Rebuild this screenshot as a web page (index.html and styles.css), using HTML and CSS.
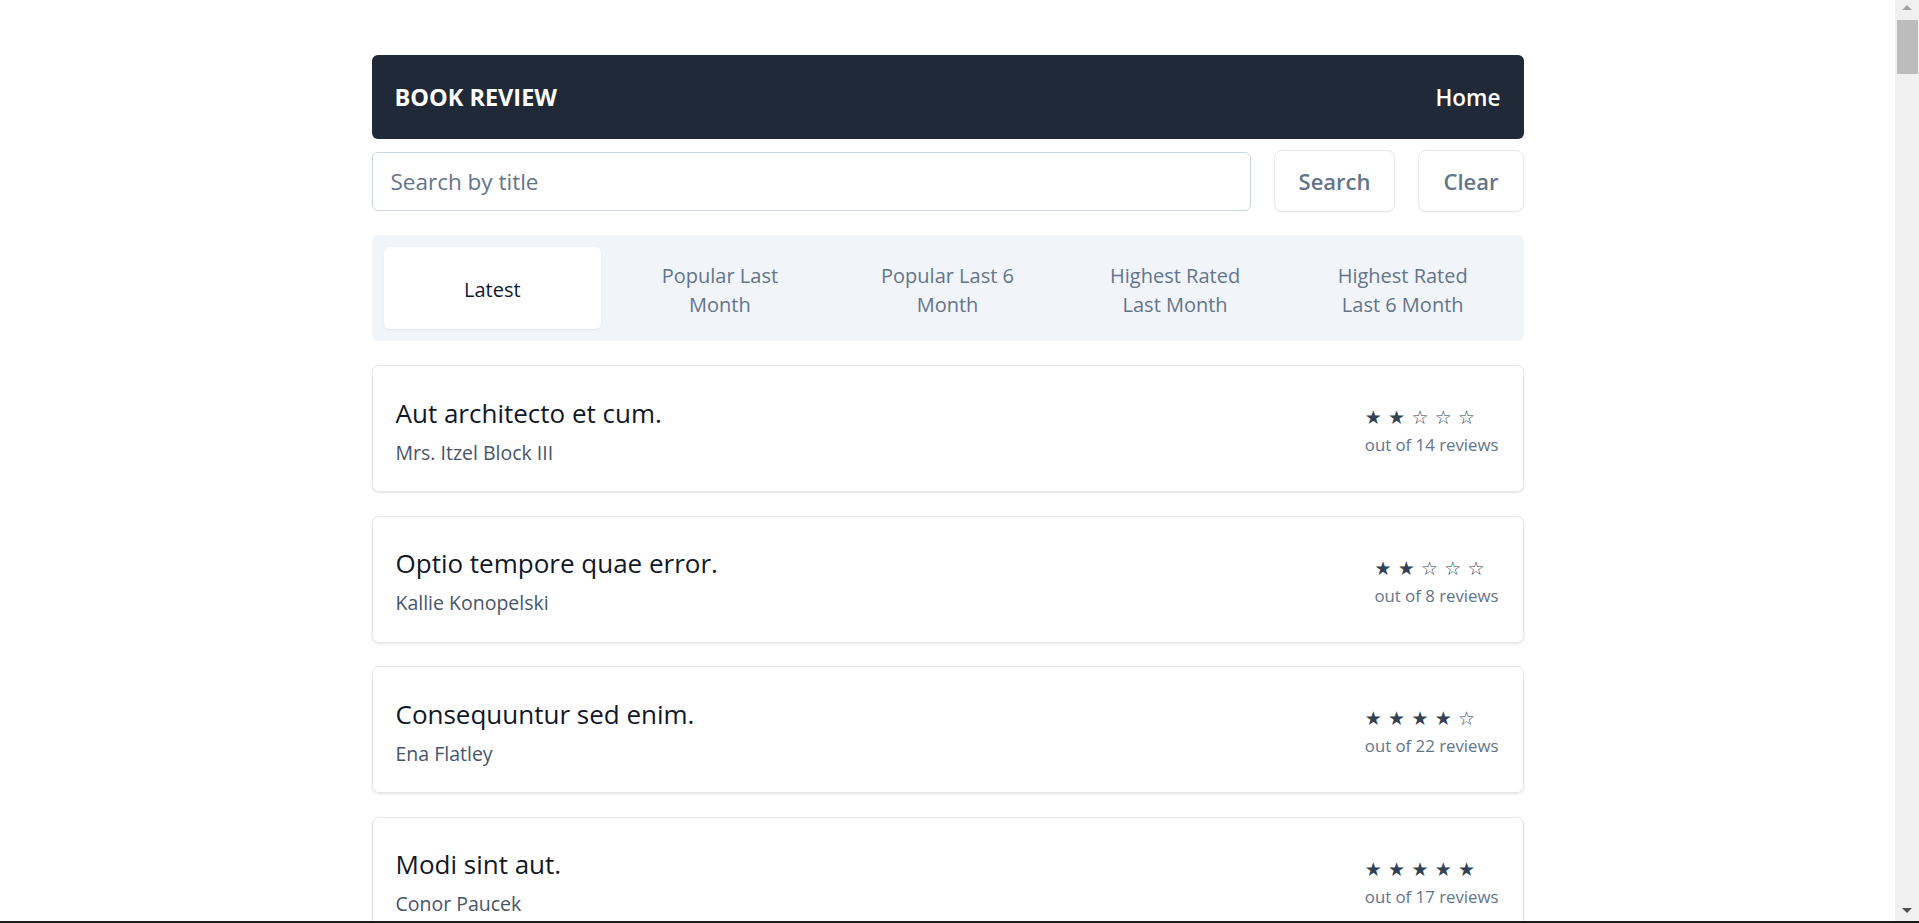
FILE: index.html
```html
<!DOCTYPE html>
<html lang="en">
<head>
<meta charset="utf-8">
<title>Book Review</title>
<link rel="stylesheet" href="styles.css">
</head>
<body>
<div class="container">
  <nav class="navbar">
    <span class="brand">BOOK REVIEW</span>
    <a class="nav-link" href="#">Home</a>
  </nav>

  <form class="search-row">
    <input class="search-input" type="text" placeholder="Search by title">
    <button class="btn" type="button">Search</button>
    <button class="btn" type="button">Clear</button>
  </form>

  <div class="tabs">
    <a class="tab active" href="#">Latest</a>
    <a class="tab" href="#">Popular Last<br>Month</a>
    <a class="tab" href="#">Popular Last 6<br>Month</a>
    <a class="tab" href="#">Highest Rated<br>Last Month</a>
    <a class="tab" href="#">Highest Rated<br>Last 6 Month</a>
  </div>

  <ul class="book-list">
    <li class="book">
      <div class="book-info">
        <div class="book-title">Aut architecto et cum.</div>
        <div class="book-author">Mrs. Itzel Block III</div>
      </div>
      <div class="rating">
        <div class="stars"><span>★</span><span>★</span><span>☆</span><span>☆</span><span>☆</span></div>
        <div class="reviews">out of 14 reviews</div>
      </div>
    </li>
    <li class="book">
      <div class="book-info">
        <div class="book-title">Optio tempore quae error.</div>
        <div class="book-author">Kallie Konopelski</div>
      </div>
      <div class="rating">
        <div class="stars"><span>★</span><span>★</span><span>☆</span><span>☆</span><span>☆</span></div>
        <div class="reviews">out of 8 reviews</div>
      </div>
    </li>
    <li class="book">
      <div class="book-info">
        <div class="book-title">Consequuntur sed enim.</div>
        <div class="book-author">Ena Flatley</div>
      </div>
      <div class="rating">
        <div class="stars"><span>★</span><span>★</span><span>★</span><span>★</span><span>☆</span></div>
        <div class="reviews">out of 22 reviews</div>
      </div>
    </li>
    <li class="book">
      <div class="book-info">
        <div class="book-title">Modi sint aut.</div>
        <div class="book-author">Conor Paucek</div>
      </div>
      <div class="rating">
        <div class="stars"><span>★</span><span>★</span><span>★</span><span>★</span><span>★</span></div>
        <div class="reviews">out of 17 reviews</div>
      </div>
    </li>
    <li class="book">
      <div class="book-info">
        <div class="book-title">Et voluptas et quia.</div>
        <div class="book-author">Ms. Ruthe Hahn</div>
      </div>
      <div class="rating">
        <div class="stars"><span>★</span><span>★</span><span>★</span><span>☆</span><span>☆</span></div>
        <div class="reviews">out of 11 reviews</div>
      </div>
    </li>
  </ul>
</div>

<div class="fake-scrollbar" aria-hidden="true">
  <div class="sb-arrow sb-up"></div>
  <div class="sb-thumb"></div>
  <div class="sb-arrow sb-down"></div>
</div>
<div class="screen-edge" aria-hidden="true"></div>
</body>
</html>
```

FILE: styles.css
```css
* { box-sizing: border-box; }

html, body {
  margin: 0;
  padding: 0;
  background: #ffffff;
  font-family: "Open Sans", "Noto Sans", "Liberation Sans", sans-serif;
  color: #0f172a;
}

body {
  padding-right: 24px;
}

.container {
  width: 1152px;
  margin: 55px auto 40px;
}

.navbar {
  display: flex;
  align-items: center;
  justify-content: space-between;
  height: 84px;
  padding: 0 23px 0 23px;
  background: #1f2937;
  border-radius: 6px;
}

.brand {
  color: #ffffff;
  font-weight: 700;
  font-size: 23.5px;
}

.nav-link {
  color: #ffffff;
  font-weight: 600;
  font-size: 22.5px;
  text-decoration: none;
}

.search-row {
  display: flex;
  align-items: center;
  gap: 23px;
  margin: 11px 0 23px;
}

.search-input {
  flex: 1;
  height: 59px;
  padding: 0 18px;
  border: 1px solid #cbd5e1;
  border-radius: 6px;
  font-family: inherit;
  font-size: 22.5px;
  color: #0f172a;
  outline: none;
}

.search-input::placeholder {
  color: #64748b;
}

.btn {
  height: 62px;
  padding: 0 24px;
  background: #ffffff;
  border: 1px solid #e5e7eb;
  border-radius: 8px;
  box-shadow: 0 1px 2px rgba(0,0,0,0.04);
  font-family: inherit;
  font-size: 22px;
  font-weight: 600;
  color: #64748b;
}

.tabs {
  display: grid;
  grid-template-columns: repeat(5, 1fr);
  gap: 10px;
  padding: 12px;
  background: #f1f5f9;
  border-radius: 6px;
  margin-bottom: 24px;
}

.tab {
  display: flex;
  align-items: center;
  justify-content: center;
  height: 82px;
  padding-top: 4px;
  text-align: center;
  font-size: 20px;
  font-weight: 500;
  line-height: 29.5px;
  color: #64748b;
  text-decoration: none;
  border-radius: 6px;
}

.tab.active {
  background: #ffffff;
  color: #0f172a;
  font-weight: 400;
  padding-top: 4px;
  box-shadow: 0 1px 2px rgba(0,0,0,0.06);
}

.book-list {
  list-style: none;
  margin: 0;
  padding: 0;
  display: flex;
  flex-direction: column;
  gap: 23.5px;
}

.book {
  display: flex;
  align-items: center;
  justify-content: space-between;
  height: 127px;
  padding: 0 24px 0 23px;
  border: 1px solid #e5e7eb;
  border-radius: 7px;
  box-shadow: 0 1px 3px rgba(0,0,0,0.08), 0 1px 2px rgba(0,0,0,0.04);
}

.book-info {
  padding-top: 6px;
}

.book-title {
  font-size: 26px;
  font-weight: 500;
  line-height: 34px;
  color: #111827;
}

.book-author {
  margin-top: 8px;
  font-size: 19.5px;
  line-height: 30px;
  color: #475569;
}

.rating {
  padding-top: 5px;
}

.stars {
  display: flex;
  font-family: "DejaVu Sans", sans-serif;
  font-size: 19px;
  line-height: 27px;
  color: #334155;
}

.stars span {
  width: 23.3px;
}

.reviews {
  font-size: 16.8px;
  line-height: 27px;
  color: #64748b;
}

/* browser chrome lookalike: vertical scrollbar overlaying the right edge */
.fake-scrollbar {
  position: fixed;
  top: 0;
  right: 0;
  width: 24px;
  height: 100vh;
  background: #f0f0f0;
}

.sb-thumb {
  position: absolute;
  top: 20px;
  left: 2px;
  width: 21px;
  height: 54px;
  background: #bcbcbc;
}

.sb-arrow {
  position: absolute;
  left: 7px;
  width: 0;
  height: 0;
  border-left: 5px solid transparent;
  border-right: 5px solid transparent;
}

.sb-up {
  top: 5px;
  border-bottom: 5px solid #a3a3a3;
}

.sb-down {
  bottom: 10px;
  border-top: 5px solid #505050;
}

.screen-edge {
  position: fixed;
  left: 0;
  right: 0;
  bottom: 0;
  height: 2px;
  background: #1b1b1b;
}
```
